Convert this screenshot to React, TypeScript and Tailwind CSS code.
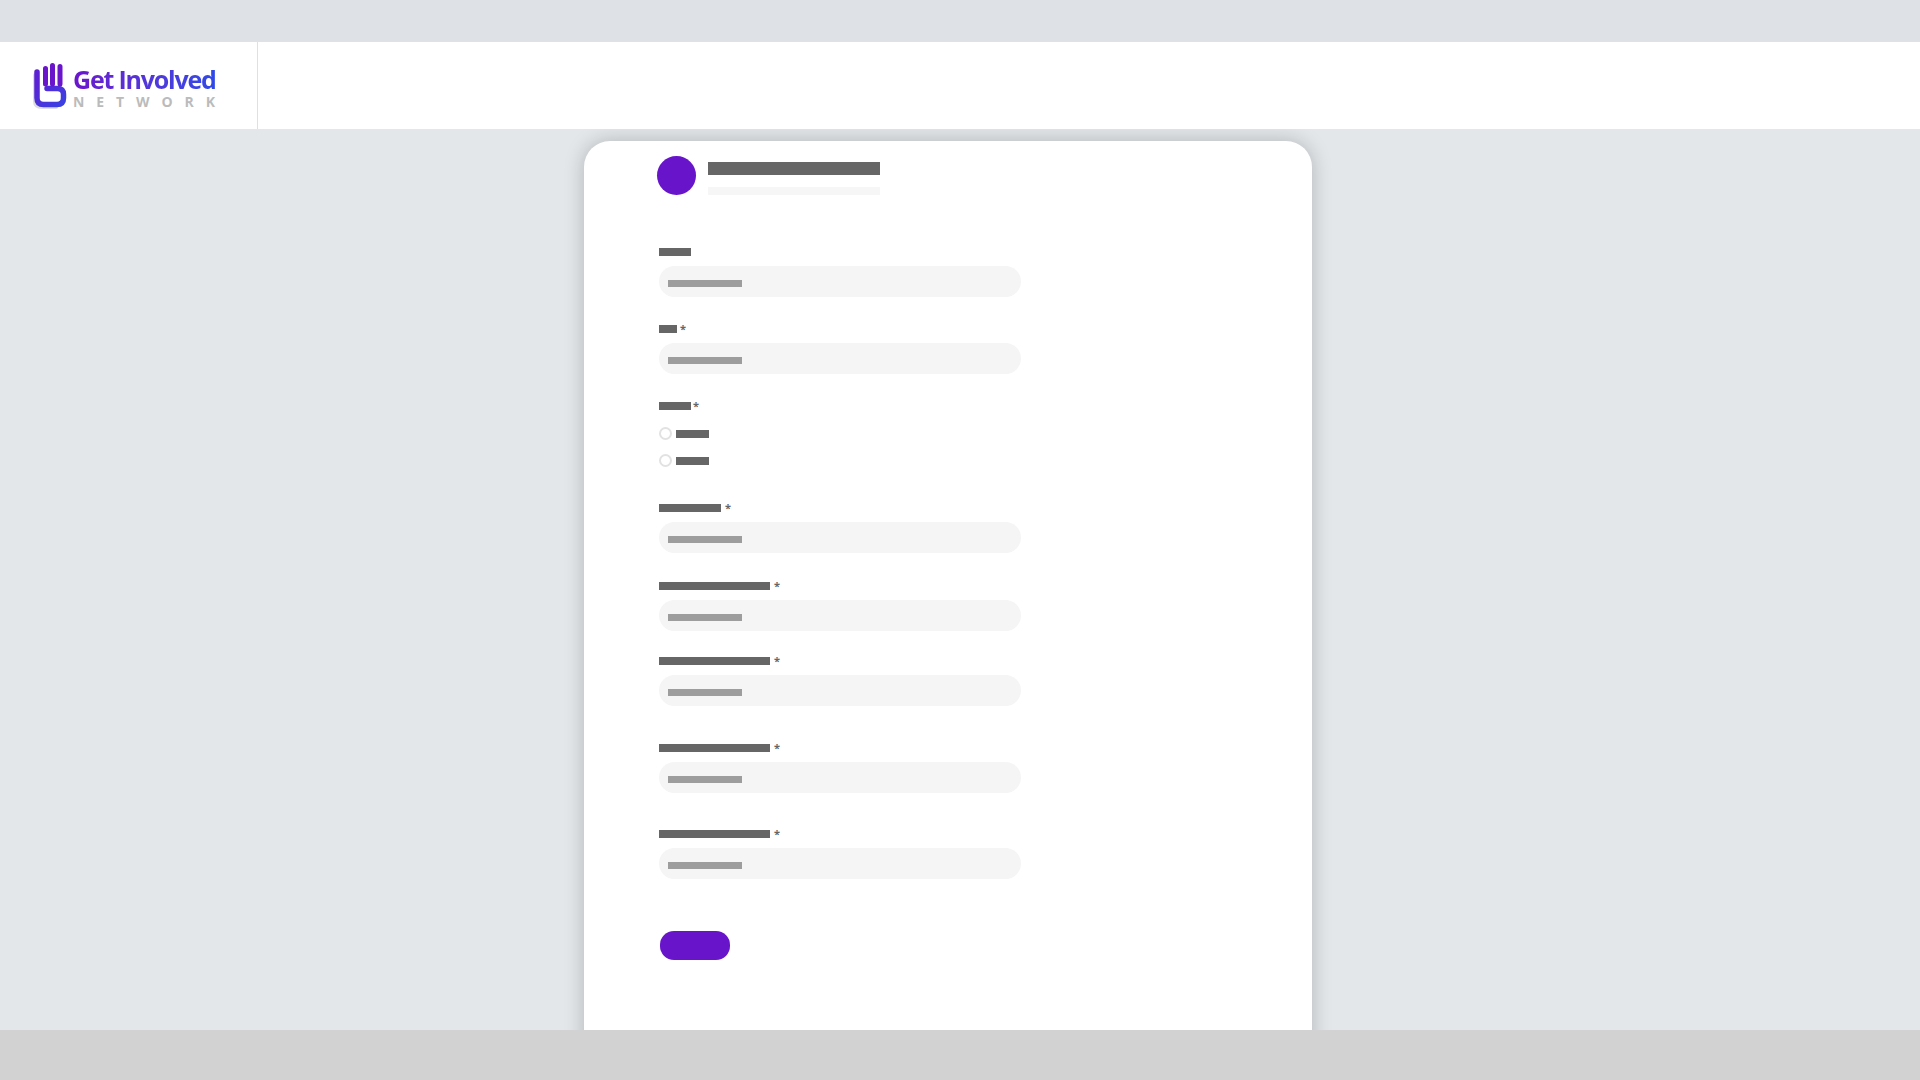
import React from "react";

const sans = { fontFamily: '"Open Sans", "Liberation Sans", sans-serif' };

function Logo() {
  return (
    <div className="flex items-start gap-[5px]">
      <svg width="38" height="48" viewBox="30 60 38 48" fill="none" className="-mt-[1px]">
        <defs>
          <linearGradient id="hand" gradientUnits="userSpaceOnUse" x1="40" y1="80" x2="60" y2="106">
            <stop offset="0" stopColor="#5a22d4" />
            <stop offset="1" stopColor="#3a41e2" />
          </linearGradient>
        </defs>
        <path d="M35 74 V100 Q35 106 42 106 H56" stroke="#dddddd" strokeWidth="4" strokeLinecap="round" />
        <path d="M37 71 V97 Q37 103.5 43.5 103.5 H57 Q63.5 103.5 63.5 97 V93.5 Q63.5 87.5 57.5 87.5 H47" stroke="url(#hand)" strokeWidth="5.5" strokeLinecap="round" />
        <path d="M45.5 67.5 V83 M52.5 64.5 V83 M60 65.5 V83" stroke="#6a14cc" strokeWidth="5" strokeLinecap="round" />
      </svg>
      <div className="flex w-[142px] flex-col" style={sans}>
        <span className="mt-[2px] whitespace-nowrap bg-gradient-to-r from-[#6a14cc] to-[#2f49e6] bg-clip-text text-[25px] leading-[30px] font-bold tracking-[-1.2px] text-transparent">
          Get Involved
        </span>
        <span className="mt-[1px] flex justify-between text-[14px] leading-[14px] font-bold text-[#bbbbbb]">
          <span>N</span><span>E</span><span>T</span><span>W</span><span>O</span><span>R</span><span>K</span>
        </span>
      </div>
    </div>
  );
}

function Star({ className }: { className: string }) {
  return (
    <span className={`text-[11px] leading-[8px] font-bold text-[#666666] ${className}`} style={sans}>
      *
    </span>
  );
}

function FieldInput() {
  return (
    <div className="mt-[10px] flex h-[31px] w-[362px] items-center rounded-[16px] bg-[#f5f5f5] pl-[9px]">
      <div className="mt-[4px] h-[7px] w-[74px] bg-[#9d9d9d]" />
    </div>
  );
}

function LabelRow({ width, starGap }: { width: string; starGap: string }) {
  return (
    <div className="flex h-[8px] items-start">
      <div className={`h-[8px] bg-[#666666] ${width}`} />
      <Star className={starGap} />
    </div>
  );
}

function Radio() {
  return (
    <div className="flex h-[13px] items-center gap-[4px]">
      <div className="h-[13px] w-[13px] rounded-full border-2 border-[#e2e2e2] bg-white" />
      <div className="h-[8px] w-[33px] bg-[#666666]" />
    </div>
  );
}

export default function App() {
  return (
    <div className="flex h-screen w-full flex-col overflow-hidden bg-[#e3e7ea]">
      <div className="h-[42px] shrink-0 bg-[#dee1e6]" />
      <header className="relative z-10 flex h-[87px] shrink-0 bg-white">
        <div className="flex h-full w-[258px] items-center border-r border-[#e0e0e0] pl-[30px]">
          <Logo />
        </div>
      </header>
      <main className="min-h-0 flex-1 overflow-hidden">
        <div className="mt-[12px] ml-[584px] h-[950px] w-[728px] rounded-t-[26px] bg-white pt-[15px] pl-[75px] shadow-[0_0_20px_rgba(0,0,0,0.22)]">
          <div className="flex">
            <div className="-ml-[2px] h-[39px] w-[39px] rounded-full bg-[#6714cb]" />
            <div className="ml-[12px] pt-[6px]">
              <div className="h-[13px] w-[172px] bg-[#666666]" />
              <div className="mt-[12px] h-[8px] w-[172px] bg-[#f6f6f6]" />
            </div>
          </div>

          <div className="mt-[53px]">
            <div className="h-[8px] w-[32px] bg-[#666666]" />
            <FieldInput />
          </div>

          <div className="mt-[28px]">
            <LabelRow width="w-[18px]" starGap="ml-[3px]" />
            <FieldInput />
          </div>

          <div className="mt-[28px]">
            <LabelRow width="w-[32px]" starGap="ml-[2px]" />
            <div className="mt-[17px] flex flex-col gap-[14px]">
              <Radio />
              <Radio />
            </div>
          </div>

          <div className="mt-[37px]">
            <LabelRow width="w-[62px]" starGap="ml-[4px]" />
            <FieldInput />
          </div>

          <div className="mt-[29px]">
            <LabelRow width="w-[111px]" starGap="ml-[4px]" />
            <FieldInput />
          </div>

          <div className="mt-[26px]">
            <LabelRow width="w-[111px]" starGap="ml-[4px]" />
            <FieldInput />
          </div>

          <div className="mt-[38px]">
            <LabelRow width="w-[111px]" starGap="ml-[4px]" />
            <FieldInput />
          </div>

          <div className="mt-[37px]">
            <LabelRow width="w-[111px]" starGap="ml-[4px]" />
            <FieldInput />
          </div>

          <div className="mt-[52px] ml-[1px] h-[29px] w-[70px] rounded-[14px] bg-[#6714cb]" />
        </div>
      </main>
      <footer className="relative z-10 h-[50px] shrink-0 bg-[#d2d2d2]" />
    </div>
  );
}
